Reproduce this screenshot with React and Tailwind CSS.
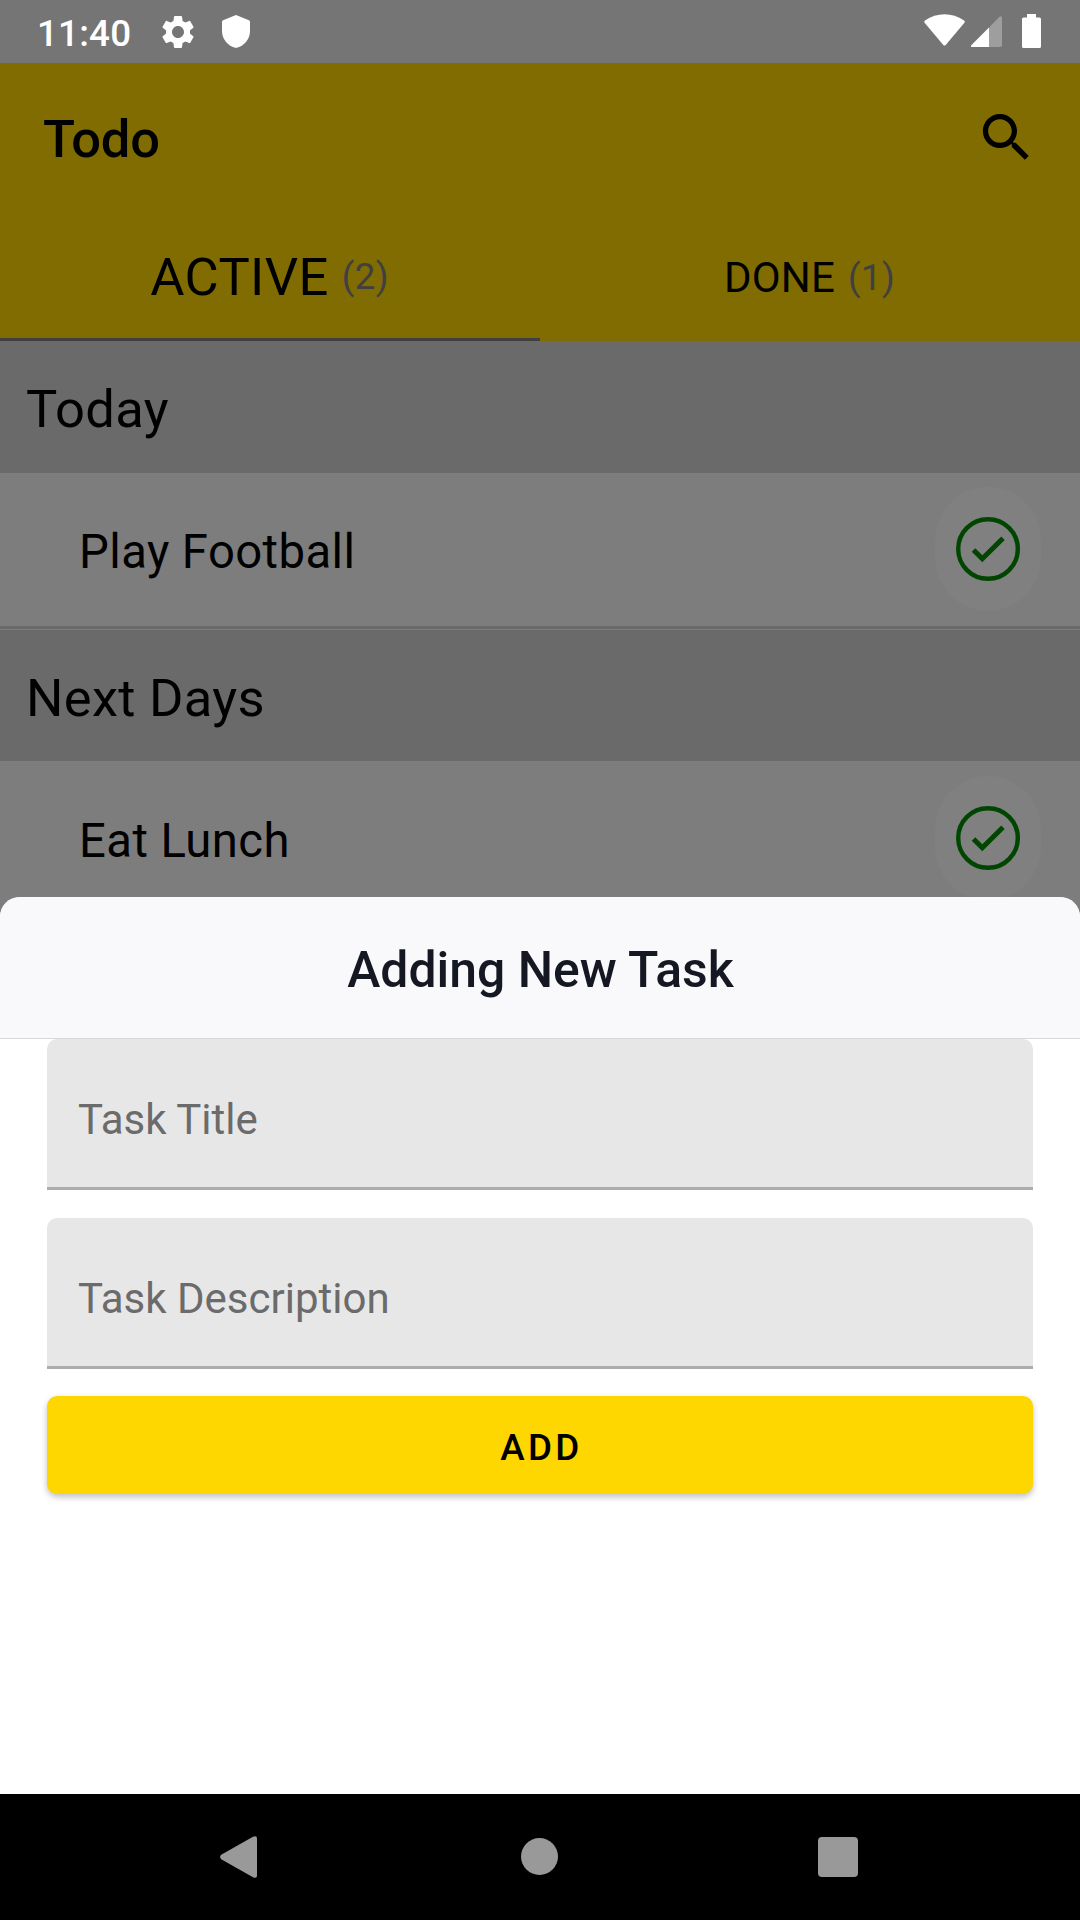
function StatusBar() {
  return (
    <header className="flex h-[63px] shrink-0 items-center bg-[#757575] text-white">
      <span className="ml-[37px] w-[96px] pt-[6px] text-[36.75px] leading-none font-medium tracking-[0.200px] whitespace-nowrap">11:40</span>
      <svg className="ml-[25px] size-[40px] shrink-0" viewBox="0 0 24 24" fill="currentColor">
        <path d="M19.14 12.94c.04-.3.06-.61.06-.94 0-.32-.02-.64-.07-.94l2.03-1.58c.18-.14.23-.41.12-.61l-1.92-3.32c-.12-.22-.37-.29-.59-.22l-2.39.96c-.5-.38-1.03-.7-1.62-.94l-.36-2.54c-.04-.24-.24-.41-.48-.41h-3.84c-.24 0-.43.17-.47.41l-.36 2.54c-.59.24-1.13.57-1.62.94l-2.39-.96c-.22-.08-.47 0-.59.22L2.74 8.87c-.12.21-.08.47.12.61l2.03 1.58c-.05.3-.09.63-.09.94s.02.64.07.94l-2.03 1.58c-.18.14-.23.41-.12.61l1.92 3.32c.12.22.37.29.59.22l2.39-.96c.5.38 1.03.7 1.62.94l.36 2.54c.05.24.24.41.48.41h3.84c.24 0 .44-.17.47-.41l.36-2.54c.59-.24 1.13-.56 1.62-.94l2.39.96c.22.08.47 0 .59-.22l1.92-3.32c.12-.22.07-.47-.12-.61l-2.01-1.58zM12 15.6c-1.98 0-3.6-1.62-3.6-3.6s1.62-3.6 3.6-3.6 3.6 1.62 3.6 3.6-1.62 3.6-3.6 3.6z" />
      </svg>
      <svg className="ml-[24px] h-[33px] w-[28px] shrink-0" viewBox="0 0 28 33" fill="currentColor">
        <path d="M14 0 27 5.2Q28 5.7 28 7v9c0 8-5.500 15-14 17C5.500 31 0 24 0 16V7Q0 5.700 1 5.200Z" />
      </svg>
      <svg className="mb-[3px] ml-auto h-[32px] w-[41px] shrink-0" viewBox="0 0 41 32" fill="currentColor">
        <path d="M.6 8.800Q-.3 7.500 1 6.500C13-2 28-2 40 6.500Q41.300 7.500 40.400 8.800L21.700 31Q20.500 32.200 19.300 31Z" />
      </svg>
      <svg className="ml-[6px] h-[31px] w-[31px] shrink-0" viewBox="0 0 31 31" fill="currentColor">
        <path fillOpacity=".3" d="M18 11.500 28.500.8Q31-1 31 2V29Q31 31 29 31H18Z" />
        <path d="M18 11.500V31H1.500Q-1 31 .5 29Z" />
      </svg>
      <svg className="mr-[39px] mb-[1px] ml-[20px] h-[34px] w-[19px] shrink-0" viewBox="0 0 19 34" fill="currentColor">
        <path d="M5 0h9v3.500h3.500Q19 3.500 19 5V32.500Q19 34 17.500 34h-16Q0 34 0 32.500V5Q0 3.500 1.500 3.500H5Z" />
      </svg>
    </header>
  );
}

function AppBar() {
  return (
    <div className="flex h-[152px] shrink-0 items-center justify-between bg-[#806c00] pr-[42px] pl-[43px]">
      <h1 className="text-[52.5px] leading-none font-medium tracking-[-0.200px]">Todo</h1>
      <svg className="mb-[3px] size-[63px]" viewBox="0 0 24 24" fill="currentColor">
        <path d="M15.500 14h-.79l-.28-.27C15.410 12.590 16 11.110 16 9.500 16 5.910 13.090 3 9.500 3S3 5.910 3 9.500 5.910 16 9.500 16c1.610 0 3.090-.59 4.230-1.570l.27.28v.79l5 4.990L20.490 19l-4.990-5zm-6 0C7.010 14 5 11.990 5 9.500S7.010 5 9.500 5 14 7.010 14 9.500 11.990 14 9.500 14z" />
      </svg>
    </div>
  );
}

function Tabs() {
  return (
    <nav className="grid h-[126px] shrink-0 grid-cols-2 bg-[#806c00]">
      <div className="flex items-center justify-center gap-[13px] border-b-3 border-[#404040] pt-[2px] pr-[1px]">
        <span className="text-[52.5px] leading-none tracking-[0.400px]">ACTIVE</span>
        <span className="text-[36.75px] leading-none tracking-[0.300px] text-[#404040]">(2)</span>
      </div>
      <div className="flex items-center justify-center gap-[13px] border-b-3 border-transparent pt-[2px] pr-[1px]">
        <span className="text-[42px] leading-none tracking-[0.200px]">DONE</span>
        <span className="pt-[2px] text-[36.75px] leading-none tracking-[0.300px] text-[#404040]">(1)</span>
      </div>
    </nav>
  );
}

function SectionTitle({ children }) {
  return (
    <h2 className="flex items-center bg-[#6a6a6a] pt-[4.500px] pl-[26px] text-[52.5px] leading-none tracking-[0.300px]">
      {children}
    </h2>
  );
}

function TaskRow({ children }) {
  return (
    <div className="flex h-[153px] items-center justify-between bg-[#7d7d7d] pr-[39px] pl-[79px]">
      <span className="pt-[7px] text-[47.25px] leading-none tracking-[0.420px]">{children}</span>
      <span className="mb-[1px] flex h-[124px] w-[106px] items-center justify-center rounded-[53px] bg-[#808080]">
        <svg className="size-[64px]" viewBox="0 0 64 64" fill="none" stroke="#004600">
          <circle cx="32" cy="32" r="29.800" strokeWidth="4.400" />
          <path d="M17.500 33 26.300 41.800 47 21.200" strokeWidth="5" />
        </svg>
      </span>
    </div>
  );
}

function Field({ label }) {
  return (
    <div className="mb-[28px] flex h-[151px] items-center rounded-t-[10px] border-b-[3px] border-[#adadad] bg-[#e7e7e7] pt-[14px] pl-[31px] text-[42px] leading-none text-[#6b6b6b]">
      {label}
    </div>
  );
}

function Sheet() {
  return (
    <section className="absolute inset-x-0 top-[897px] bottom-[126px] overflow-hidden rounded-t-[20px] bg-white">
      <h2 className="flex h-[142px] items-center justify-center border-b border-[#d8d8da] bg-[#f9f9fb] pt-[7px] pl-[1px] text-[49.875px] leading-none font-medium text-[#151722]">
        Adding New Task
      </h2>
      <div className="px-[47px]">
        <Field label="Task Title" />
        <Field label="Task Description" />
        <button className="mt-[-1px] flex h-[98px] w-full items-center justify-center rounded-[10px] bg-[#ffd700] pt-[6px] pl-[3px] text-[36.75px] leading-none font-medium tracking-[3.300px] shadow-[0_3px_6px_rgba(0,0,0,0.25)]">
          ADD
        </button>
      </div>
    </section>
  );
}

function NavBar() {
  return (
    <footer className="absolute inset-x-0 bottom-0 flex h-[126px] items-center bg-black pb-[1px] text-[#999999]">
      <svg className="ml-[220px] h-[42px] w-[37px]" viewBox="0 0 37 42" fill="currentColor">
        <path d="M1.200 18.800 33 .7Q37-1 37 2.500V39.500Q37 43 33 41.300L1.200 23.200Q-1 21 1.200 18.800Z" />
      </svg>
      <span className="ml-[264px] size-[37px] rounded-full bg-[#999999]" />
      <span className="ml-[260px] size-[40px] rounded-[4px] bg-[#999999]" />
    </footer>
  );
}

export default function App() {
  return (
    <main className="relative flex h-[1920px] w-[1080px] flex-col overflow-hidden bg-[#7d7d7d] font-[Roboto,sans-serif] text-black">
      <StatusBar />
      <AppBar />
      <Tabs />
      <div className="grid h-[132px] shrink-0">
        <SectionTitle>Today</SectionTitle>
      </div>
      <TaskRow>Play Football</TaskRow>
      <div className="h-[4px] shrink-0 border-t-3 border-[#6a6a6a] bg-[#7d7d7d]" />
      <div className="grid h-[131px] shrink-0">
        <SectionTitle>Next Days</SectionTitle>
      </div>
      <div className="shrink-0 pt-[1px]">
        <TaskRow>Eat Lunch</TaskRow>
      </div>
      <Sheet />
      <NavBar />
    </main>
  );
}
